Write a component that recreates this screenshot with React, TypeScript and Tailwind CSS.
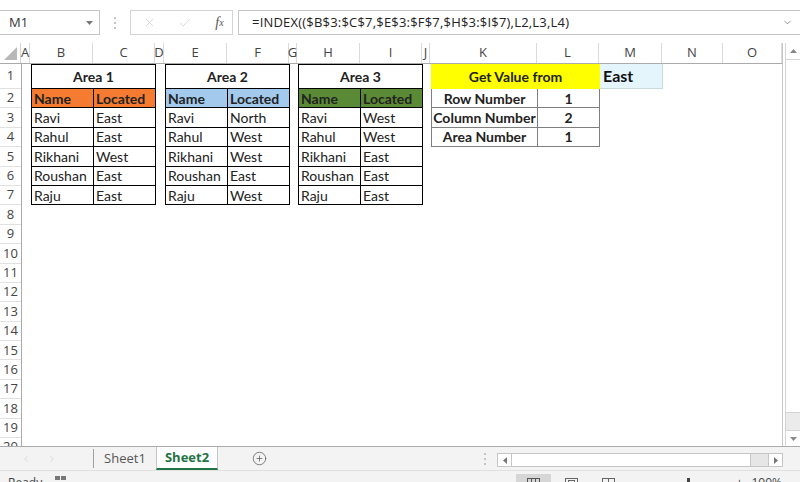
import React from 'react';
import { X, Check, ChevronDown, ChevronLeft, ChevronRight, CirclePlus } from 'lucide-react';

// column letters with their pixel widths (class strings written out in full)
const COLUMNS: { label: string; w: string }[] = [
  { label: 'A', w: 'w-[9px]' },
  { label: 'B', w: 'w-[63px]' },
  { label: 'C', w: 'w-[62px]' },
  { label: 'D', w: 'w-[9px]' },
  { label: 'E', w: 'w-[63px]' },
  { label: 'F', w: 'w-[62px]' },
  { label: 'G', w: 'w-[8px]' },
  { label: 'H', w: 'w-[63px]' },
  { label: 'I', w: 'w-[62px]' },
  { label: 'J', w: 'w-[8px]' },
  { label: 'K', w: 'w-[107px]' },
  { label: 'L', w: 'w-[62px]' },
  { label: 'M', w: 'w-[63px]' },
  { label: 'N', w: 'w-[61px]' },
  { label: 'O', w: 'w-[59px]' },
];

const ROWS = Array.from({ length: 20 }, (_, i) => i + 1);

interface AreaTableProps {
  title: string;
  headBg: string;
  rows: [string, string][];
}

const AreaTable: React.FC<AreaTableProps> = ({ title, headBg, rows }) => (
  <div className="w-[125px] flex flex-col text-[14px] text-[#222]">
    <div className="h-[25px] border border-black flex items-center justify-center font-bold">{title}</div>
    <div className={`h-[19.4px] flex border-x border-b border-black font-bold ${headBg}`}>
      <div className="w-[62px] border-r border-black px-[2px] flex items-center">Name</div>
      <div className="flex-1 px-[2px] flex items-center">Located</div>
    </div>
    {rows.map(([name, place]) => (
      <div key={name} className="h-[19.4px] flex border-x border-b border-black">
        <div className="w-[62px] border-r border-black px-[2px] flex items-center">{name}</div>
        <div className="flex-1 px-[2px] flex items-center">{place}</div>
      </div>
    ))}
  </div>
);

const LookupTable: React.FC = () => {
  const rows: [string, string][] = [
    ['Row Number', '1'],
    ['Column Number', '2'],
    ['Area Number', '1'],
  ];
  return (
    <div className="w-[169px] flex flex-col text-[14px] text-[#222] font-bold">
      <div className="h-[25px] bg-[#ffff00] flex items-center justify-center">Get Value from</div>
      {rows.map(([label, value]) => (
        <div key={label} className="h-[19.4px] flex border-x border-b border-[#7f7f7f]">
          <div className="w-[106px] border-r border-[#7f7f7f] flex items-center justify-center">{label}</div>
          <div className="flex-1 flex items-center justify-center">{value}</div>
        </div>
      ))}
    </div>
  );
};

const Dots: React.FC = () => (
  <div className="flex flex-col gap-[3px]">
    <div className="w-[2px] h-[2px] bg-[#c4c4c4]" />
    <div className="w-[2px] h-[2px] bg-[#c4c4c4]" />
    <div className="w-[2px] h-[2px] bg-[#c4c4c4]" />
  </div>
);

export default function App() {
  return (
    <div className="w-[800px] h-[482px] overflow-hidden bg-white flex flex-col font-['Open_Sans',sans-serif] text-[#444]">
      {/* Formula bar */}
      <div className="h-[43px] shrink-0 flex items-start pt-[10px]">
        <div className="w-[100px] h-[25px] border border-l-0 border-[#c6c6c6] flex items-center pl-[9px] pr-[6px] text-[13px] text-[#333]">
          <span className="flex-1">M1</span>
          <svg width="7" height="4" viewBox="0 0 7 4"><polygon points="0,0 7,0 3.5,4" fill="#777" /></svg>
        </div>
        <div className="w-[30px] h-[25px] flex items-center justify-center">
          <Dots />
        </div>
        <div className="w-[103px] h-[25px] border border-[#d4d4d4] flex items-center">
          <div className="w-[34px] flex justify-center pl-[2px]"><X size={13} strokeWidth={1.2} color="#c6c6c6" /></div>
          <div className="w-[36px] flex justify-center pl-[4px]"><Check size={14} strokeWidth={1.2} color="#c6c6c6" /></div>
          <div className="flex-1 flex justify-center pl-[6px] font-['Liberation_Serif',serif] italic text-[14px] text-[#555]">
            f<span className="text-[10px] mt-[3px]">x</span>
          </div>
        </div>
        <div className="ml-[5px] flex-1 h-[25px] border border-r-0 border-[#c6c6c6] flex items-center pl-[13px] pr-[7px] text-[13px] tracking-[0.2px] text-[#222]">
          <span className="flex-1">=INDEX(($B$3:$C$7,$E$3:$F$7,$H$3:$I$7),L2,L3,L4)</span>
          <ChevronDown size={11} strokeWidth={1.5} color="#666" />
        </div>
      </div>

      {/* Grid + vertical scrollbar */}
      <div className="h-[404px] shrink-0 flex border-b border-[#ababab]">
        <div className="w-[783px] flex flex-col border-r border-[#c6c6c6]">
          {/* Column headers */}
          <div className="h-[21px] shrink-0 flex border-b border-[#ababab] text-[13px]">
            <div className="w-[22px] border-r border-[#d4d4d4] flex items-end justify-end pr-[3px] pb-[3px]">
              <svg width="13" height="13" viewBox="0 0 13 13"><polygon points="13,0 13,13 0,13" fill="#b8b8b8" /></svg>
            </div>
            {COLUMNS.map((c) => (
              <div key={c.label} className={`${c.w} shrink-0 border-r border-[#dadada] flex items-center justify-center`}>
                {c.label}
              </div>
            ))}
          </div>

          <div className="flex-1 flex overflow-hidden">
            {/* Row headers */}
            <div className="w-[22px] shrink-0 flex flex-col border-r border-[#ababab] text-[13px]">
              {ROWS.map((r) => (
                <div
                  key={r}
                  className={`${r === 1 ? 'h-[25px]' : 'h-[19.4px]'} shrink-0 border-b border-[#e1e1e1] flex items-center justify-center`}
                >
                  {r}
                </div>
              ))}
            </div>

            {/* Sheet cells */}
            <div className="flex-1 flex items-start font-['Lato',sans-serif]">
              <div className="w-[9px] shrink-0" />
              <AreaTable
                title="Area 1"
                headBg="bg-[#f47b2f]"
                rows={[['Ravi', 'East'], ['Rahul', 'East'], ['Rikhani', 'West'], ['Roushan', 'East'], ['Raju', 'East']]}
              />
              <div className="w-[9px] shrink-0" />
              <AreaTable
                title="Area 2"
                headBg="bg-[#a3c9ed]"
                rows={[['Ravi', 'North'], ['Rahul', 'West'], ['Rikhani', 'West'], ['Roushan', 'East'], ['Raju', 'West']]}
              />
              <div className="w-[8px] shrink-0" />
              <AreaTable
                title="Area 3"
                headBg="bg-[#5a8a35]"
                rows={[['Ravi', 'West'], ['Rahul', 'West'], ['Rikhani', 'East'], ['Roushan', 'East'], ['Raju', 'East']]}
              />
              <div className="w-[8px] shrink-0" />
              <LookupTable />
              <div className="w-[63px] h-[25px] shrink-0 bg-[#e5f5fc] border-r border-b border-[#c9d9e0] flex items-center pl-[3px] text-[16px] font-bold text-[#111]">
                East
              </div>
            </div>
          </div>
        </div>

        {/* Vertical scrollbar */}
        <div className="flex-1 flex flex-col ml-[2px] border-l border-[#d4d4d4] bg-[#ebebeb]">
          <div className="h-[17px] bg-white border-b border-[#d4d4d4] flex items-center justify-center">
            <svg width="7" height="4" viewBox="0 0 7 4"><polygon points="3.5,0 7,4 0,4" fill="#888" /></svg>
          </div>
          <div className="h-[353px] bg-white border-b border-[#d4d4d4]" />
          <div className="flex-1" />
          <div className="h-[16px] bg-white border-t border-[#d4d4d4] flex items-center justify-center">
            <svg width="7" height="4" viewBox="0 0 7 4"><polygon points="0,0 7,0 3.5,4" fill="#888" /></svg>
          </div>
        </div>
      </div>

      {/* Sheet tabs + horizontal scrollbar */}
      <div className="h-[23px] shrink-0 flex items-stretch bg-[#f3f3f3] text-[13px]">
        <div className="w-[93px] flex items-center gap-[16px] pl-[21px]">
          <ChevronLeft size={10} strokeWidth={1.5} color="#c8c8c8" />
          <ChevronRight size={10} strokeWidth={1.5} color="#c8c8c8" />
        </div>
        <div className="w-[63px] border-l border-[#a0a0a0] my-[2px] flex items-center justify-center text-[#555]">Sheet1</div>
        <div className="w-[62px] bg-white border-x border-[#c6c6c6] border-b-2 border-b-[#217346] flex items-center justify-center font-bold text-[#217346]">
          Sheet2
        </div>
        <div className="w-[82px] flex items-center justify-center">
          <CirclePlus size={15} strokeWidth={1.3} color="#666" />
        </div>
        <div className="flex-1 flex items-center justify-end pr-[11px]">
          <Dots />
        </div>
        <div className="w-[286px] my-[6px] mb-[3px] mr-[17px] flex border border-[#c6c6c6] bg-[#e6e6e6]">
          <div className="w-[14px] bg-white border-r border-[#c6c6c6] flex items-center justify-center">
            <svg width="4" height="7" viewBox="0 0 4 7"><polygon points="0,3.5 4,0 4,7" fill="#777" /></svg>
          </div>
          <div className="w-[239px] bg-white border-r border-[#c6c6c6]" />
          <div className="flex-1" />
          <div className="w-[14px] bg-white border-l border-[#c6c6c6] flex items-center justify-center">
            <svg width="4" height="7" viewBox="0 0 4 7"><polygon points="0,0 4,3.5 0,7" fill="#777" /></svg>
          </div>
        </div>
      </div>

      {/* Status bar (cut off at bottom) */}
      <div className="h-[22px] shrink-0 flex items-center bg-[#f3f3f3] text-[12px] text-[#444] border-t border-[#e0e0e0] pt-[3px]">
        <span className="pl-[8px] w-[55px]">Ready</span>
        <svg width="12" height="10" viewBox="0 0 12 10" className="mb-[4px]">
          <rect x="0" y="0" width="5" height="4" fill="#777" />
          <rect x="6" y="0" width="5" height="4" fill="#777" />
        </svg>
        <div className="flex-1" />
        <div className="w-[35px] h-full bg-[#d6d6d6] flex items-center justify-center">
          <svg width="13" height="11" viewBox="0 0 13 11"><rect x="0.5" y="0.5" width="12" height="10" fill="none" stroke="#555" /><line x1="4.5" y1="0" x2="4.5" y2="11" stroke="#555" /><line x1="8.5" y1="0" x2="8.5" y2="11" stroke="#555" /></svg>
        </div>
        <div className="w-[40px] flex items-center justify-center">
          <svg width="13" height="11" viewBox="0 0 13 11"><rect x="0.5" y="0.5" width="12" height="10" fill="none" stroke="#666" /><rect x="3.5" y="2.5" width="6" height="6" fill="none" stroke="#666" /></svg>
        </div>
        <div className="w-[34px] flex items-center justify-center">
          <svg width="13" height="11" viewBox="0 0 13 11"><rect x="0.5" y="0.5" width="12" height="10" fill="none" stroke="#666" /><line x1="6.5" y1="0" x2="6.5" y2="11" stroke="#666" /></svg>
        </div>
        <div className="w-[24px] text-center">-</div>
        <div className="w-[80px] h-[1px] bg-[#999] relative">
          <div className="absolute left-[38px] top-[-5px] w-[3px] h-[10px] bg-[#444]" />
        </div>
        <div className="w-[20px] text-center">+</div>
        <span className="pr-[18px] pl-[2px]">100%</span>
      </div>
    </div>
  );
}
